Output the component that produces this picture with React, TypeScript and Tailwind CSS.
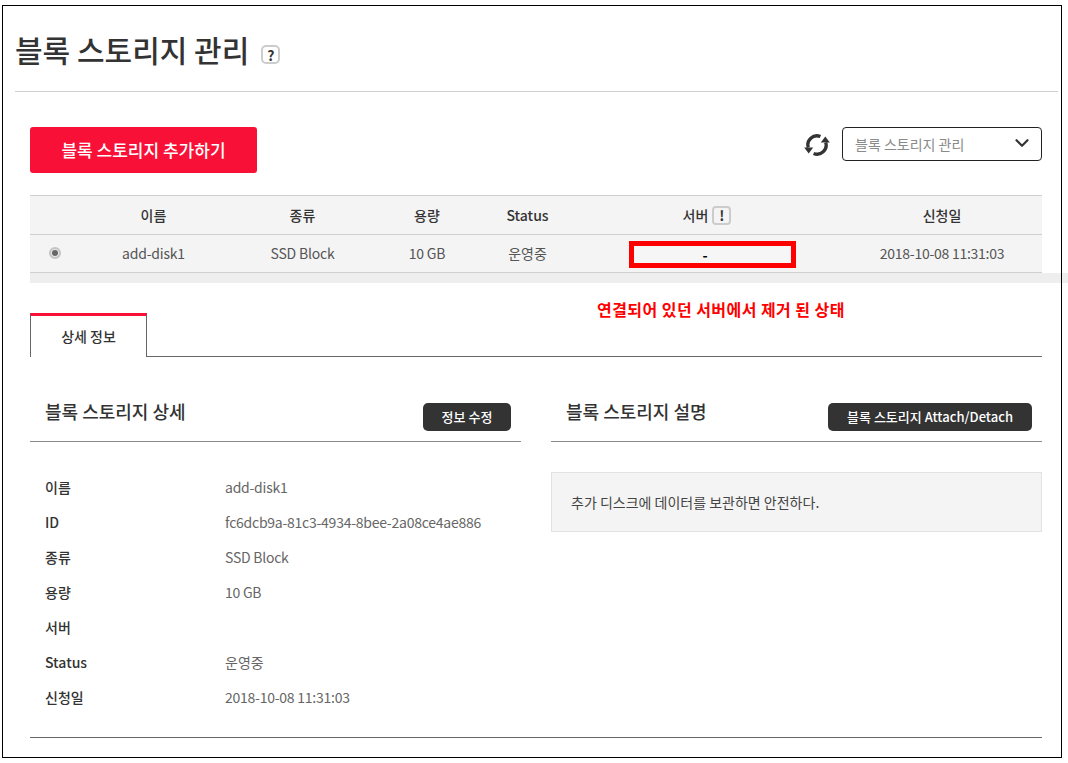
import React from "react";
import { ChevronDown } from "lucide-react";

const font = { fontFamily: '"Noto Sans CJK KR", "Noto Sans", sans-serif' };

function Refresh() {
  return (
    <svg width="26" height="24" viewBox="0 0 26 24" fill="none" className="shrink-0 mt-[1px]">
      <path d="M16.4 3.6A9 9 0 0 0 4.3 14.6" stroke="#333" strokeWidth="3.3" />
      <path d="M9.6 20.4A9 9 0 0 0 21.7 9.4" stroke="#333" strokeWidth="3.3" />
      <path d="M0.2 14.4h9L4.7 20.4z" fill="#333" />
      <path d="M25.8 9.6h-9L21.3 3.6z" fill="#333" />
    </svg>
  );
}

const rows: [string, string, boolean][] = [
  ["이름", "add-disk1", true],
  ["ID", "fc6dcb9a-81c3-4934-8bee-2a08ce4ae886", true],
  ["종류", "SSD Block", true],
  ["용량", "10 GB", true],
  ["서버", "", false],
  ["Status", "운영중", false],
  ["신청일", "2018-10-08 11:31:03", true],
];

const cols = "grid grid-cols-[48px_151px_147px_102px_99px_258px_206px]";

export default function App() {
  return (
    <div style={font} className="w-[1068px] h-[763px] overflow-hidden bg-white pt-[5px] pl-[2px]">
      <div className="relative w-[1060px] h-[753px] bg-white pt-px pl-px">
        <header className="ml-[12px] mr-[4px] h-[86px] border-b border-[#cfcfcf] flex items-start pt-[21px]">
          <h1 className="text-[30px] leading-[44px] font-medium text-[#333]">블록 스토리지 관리</h1>
          <span className="ml-[12px] mt-[18px] w-[19px] h-[19px] rounded-[5px] border-2 border-[#ccc] flex items-center justify-center text-[14px] leading-none font-bold text-[#333]">?</span>
        </header>

        <div className="ml-[27px] w-[1012px]">
          <div className="flex items-start justify-between pt-[35px] h-[103px]">
            <button className="w-[227px] h-[46px] rounded-[3px] bg-[#f91037] text-white text-[17px] font-medium">블록 스토리지 추가하기</button>
            <div className="flex items-center gap-[12px]">
              <Refresh />
              <div className="w-[200px] h-[34px] rounded-[4px] border border-[#222] flex items-center justify-between pl-[12px] pr-[8px] text-[14px] text-[#8a8a8a]">
                <span>블록 스토리지 관리</span>
                <ChevronDown size={22} strokeWidth={2.4} color="#333" className="-mt-[3px]" />
              </div>
            </div>
          </div>

          <div className="text-[14px] bg-[#f4f4f4] w-[1012px]">
            <div className={`${cols} h-[40px] border-y border-[#cfcfcf] items-center text-center font-medium text-[#333]`}>
              <span />
              <span>이름</span>
              <span>종류</span>
              <span>용량</span>
              <span>Status</span>
              <span className="flex items-center justify-center gap-[4px] pl-[2px]">
                서버
                <span className="w-[19px] h-[19px] rounded-[4px] border-2 border-[#ccc] flex items-center justify-center text-[14px] leading-none font-bold">!</span>
              </span>
              <span className="pl-[8px]">신청일</span>
            </div>
            <div className={`${cols} h-[38px] border-b border-[#cfcfcf] items-center text-center text-[#555]`}>
              <span className="flex justify-center pl-[2px] -mt-[1px]">
                <span className="w-[12px] h-[12px] rounded-full border-2 border-[#c4c4c4] bg-[#e6e6e6] flex items-center justify-center">
                  <span className="w-[6px] h-[6px] rounded-full bg-[#666] shrink-0" />
                </span>
              </span>
              <span className="tracking-[-0.2px]">add-disk1</span>
              <span className="tracking-[-0.2px]">SSD Block</span>
              <span className="tracking-[-0.2px]">10 GB</span>
              <span>운영중</span>
              <span className="flex justify-center pl-[12px] pt-[2px]">
                <span className="w-[167px] h-[27px] border-[5px] border-[#ff0000] bg-[#f6f6f6] flex items-center justify-center text-black font-bold leading-none pr-[14px]">-</span>
              </span>
              <span className="pl-[8px] tracking-[-0.27px]">2018-10-08 11:31:03</span>
            </div>
            <div className="h-[10px] w-[1038px] bg-[#eeeeee]" />
          </div>

          <div className="h-[30px] relative">
            <p className="absolute left-[567px] top-[13px] text-[16px] leading-[26px] font-bold text-[#ff0000] whitespace-nowrap tracking-[0.45px]">연결되어 있던 서버에서 제거 된 상태</p>
          </div>

          <div className="h-[44px] border-b border-[#666] flex">
            <div className="w-[117px] h-[44px] border-x border-[#666] border-t-[3px] border-t-[#f91037] bg-white flex items-center justify-center text-[14px] font-medium text-[#333]">상세 정보</div>
          </div>

          <div className="grid grid-cols-[491px_491px] gap-x-[30px] pt-[30px]">
            <section>
              <div className="h-[55px] border-b border-[#8a8a8a] flex items-start justify-between pl-[15px] pr-[10px]">
                <h2 className="text-[18px] leading-[26px] font-medium text-[#333] mt-[11px]">블록 스토리지 상세</h2>
                <button className="mt-[16px] w-[88px] h-[28px] rounded-[5px] bg-[#333] text-white text-[13px] font-medium">정보 수정</button>
              </div>
              <div className="pt-[28px] pl-[15px] text-[14px]">
                {rows.map(([k, v, latin]) => (
                  <div key={k} className="grid grid-cols-[180px_1fr] h-[35px] leading-[35px]">
                    <span className="font-medium text-[#333]">{k}</span>
                    <span className={latin ? "text-[#666] tracking-[-0.25px]" : "text-[#666]"}>{v}</span>
                  </div>
                ))}
              </div>
            </section>
            <section>
              <div className="h-[55px] border-b border-[#8a8a8a] flex items-start justify-between pl-[15px] pr-[10px]">
                <h2 className="text-[18px] leading-[26px] font-medium text-[#333] mt-[11px]">블록 스토리지 설명</h2>
                <button className="mt-[16px] w-[204px] h-[28px] rounded-[5px] bg-[#333] text-white text-[13px] font-medium">블록 스토리지 Attach/Detach</button>
              </div>
              <div className="mt-[30px] h-[60px] border border-[#e2e2e2] bg-[#f4f4f4] flex items-center pl-[19px] text-[14px] text-[#444]">
                추가 디스크에 데이터를 보관하면 안전하다.
              </div>
            </section>
          </div>

          <div className="mt-[22px] border-t border-[#666]" />
        </div>
        <div className="absolute inset-0 border border-black pointer-events-none" />
      </div>
    </div>
  );
}
